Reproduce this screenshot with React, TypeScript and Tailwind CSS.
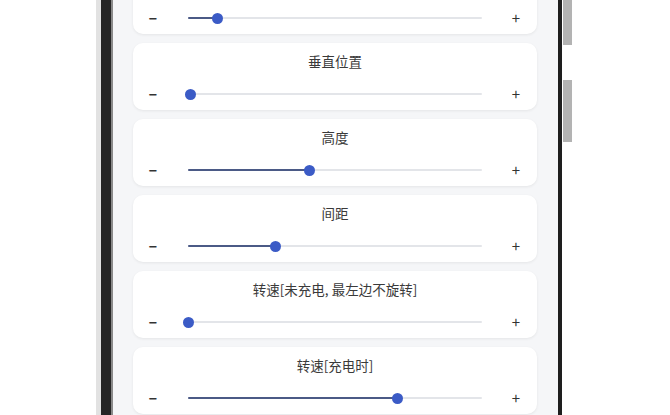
import React from "react";

const sliders = [
  { title: "", value: 0.102 },
  { title: "垂直位置", value: 0.01 },
  { title: "高度", value: 0.412 },
  { title: "间距", value: 0.296 },
  { title: "转速[未充电, 最左边不旋转]", value: 0 },
  { title: "转速[充电时]", value: 0.714 },
];

function Slider({ value }: { value: number }) {
  return (
    <div className="relative flex-1 h-[20px] mx-[28px] ml-[29px] flex items-center">
      <div className="w-full h-[2px] bg-[#e3e5e9] rounded-full flex">
        <div className="h-[2px] bg-[#4b5a86] rounded-full" style={{ width: `${value * 100}%` }} />
      </div>
      <div
        className="absolute top-1/2 w-[11px] h-[11px] -mt-[5.5px] -ml-[5.5px] rounded-full bg-[#3b5bc6]"
        style={{ left: `${value * 100}%` }}
      />
    </div>
  );
}

function Card({ title, value }: { title: string; value: number }) {
  return (
    <div className="bg-white rounded-[10px] shadow-[0_1px_3px_rgba(0,0,0,0.07)] pt-[10px] pb-[6px]">
      <div className="h-[16px] leading-[16px] text-[13.5px] text-center text-[#3a3a3a]">{title}</div>
      <div className="mt-[15px] h-[20px] flex items-center pl-[14px] pr-[15px]">
        <div className="w-[12px] text-center text-[14px] leading-[20px] text-[#333] font-bold">−</div>
        <Slider value={value} />
        <div className="w-[12px] text-center text-[15px] leading-[20px] text-[#333]">+</div>
      </div>
    </div>
  );
}

export default function App() {
  return (
    <div
      className="w-[670px] h-[415px] overflow-hidden bg-white flex"
      style={{ fontFamily: '"Noto Sans CJK SC", "Noto Sans", sans-serif' }}
    >
      <div className="w-[96px] shrink-0 bg-white" />
      <div className="w-[5px] shrink-0 bg-[#e2e2e2]" />
      <div className="w-[10px] shrink-0 bg-[#262626]" />
      <div className="w-[2px] shrink-0 bg-[#8a8a8a]" />
      <div className="w-[445px] shrink-0 bg-[#f5f6f8] pl-[20px] pr-[21px] overflow-hidden">
        <div className="-mt-[33px] flex flex-col gap-[9px]">
          {sliders.map((s, i) => (
            <Card key={i} title={s.title} value={s.value} />
          ))}
        </div>
      </div>
      <div className="w-[4px] shrink-0 bg-[#1e1e1e]" />
      <div className="w-[1px] shrink-0 bg-white" />
      <div className="w-[9px] shrink-0 flex flex-col">
        <div className="h-[45px] bg-[#b3b3b3]" />
        <div className="h-[35px]" />
        <div className="h-[62px] bg-[#b3b3b3]" />
      </div>
      <div className="flex-1 bg-white" />
    </div>
  );
}
